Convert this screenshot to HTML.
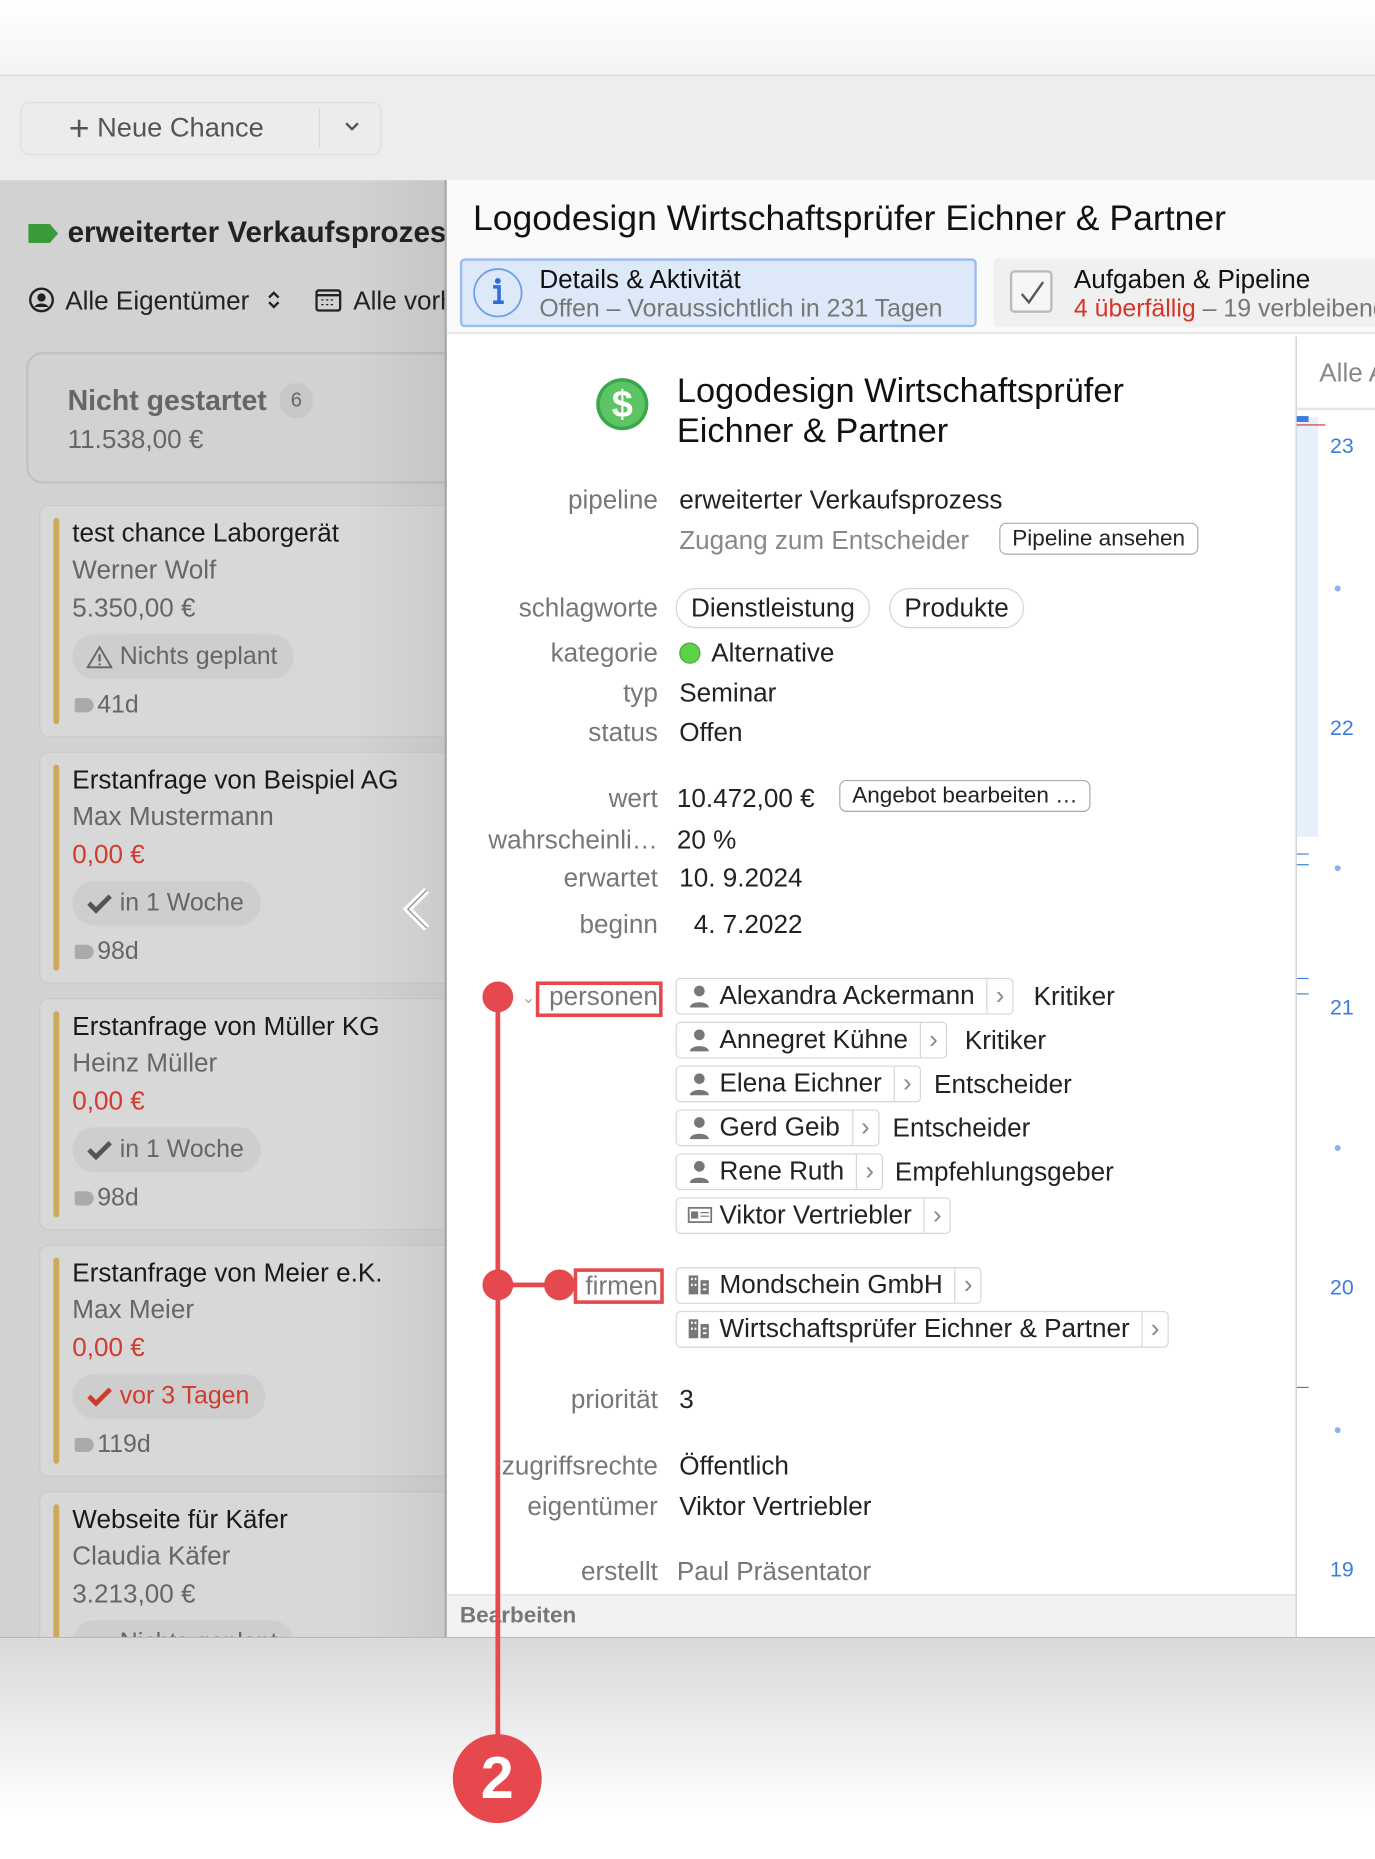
<!DOCTYPE html>
<html><head><meta charset="utf-8"><style>
*{margin:0;padding:0;box-sizing:border-box}
html,body{width:1375px;height:1859px;overflow:hidden;background:#fff}
#s{position:absolute;left:0;top:0;width:1160px;height:1568px;transform:scale(1.18534);transform-origin:0 0;font-family:"Liberation Sans",sans-serif;color:#222;overflow:hidden}
.a{position:absolute;white-space:nowrap;line-height:30px}
.lab{color:#777;font-size:22px;text-align:right;width:200px;left:355px}
.val{font-size:22px;left:573px;color:#222}
.btn{position:absolute;border:1.5px solid #aaa;border-radius:6px;background:#fff;font-size:19px;line-height:25px;padding:0 10px;white-space:nowrap}
.chip{position:absolute;border:1.5px solid #d6d6d6;border-radius:4px;background:#fff;height:31px;font-size:22px;line-height:28px;padding-left:36px;white-space:nowrap}
.chip .ar{position:absolute;right:0;top:0;width:22px;height:100%;border-left:1.5px solid #d6d6d6;color:#888;font-size:22px;text-align:center}
.card{position:absolute;left:33px;width:360px;background:#d8d8d8;border:1px solid #cacaca;border-radius:8px}
.card .bar{position:absolute;left:11px;top:10px;bottom:10px;width:5px;border-radius:3px;background:#cfa95a}
.card .t{position:absolute;left:27px;font-size:22px;white-space:nowrap;line-height:28px}
.pill{position:absolute;left:27px;height:38px;border-radius:19px;background:#cecece;font-size:21px;line-height:38px;padding:0 14px 0 40px;color:#666;white-space:nowrap}
.tag{position:absolute;left:29px;font-size:21px;color:#666;line-height:26px}
.tag:before{content:"";display:inline-block;width:16px;height:12px;background:#aaa;border-radius:2px 6px 6px 2px;margin-right:3px;vertical-align:0}
.num{position:absolute;left:1122px;color:#3a7fe0;font-size:18px}
.dot{position:absolute;left:1126px;width:5px;height:5px;border-radius:50%;background:#8ab4f0}
</style></head><body><div id="s">
<div style="position:absolute;left:0;top:0;width:1160px;height:63px;background:linear-gradient(#fff,#f4f4f4)"></div>
<div style="position:absolute;left:0;top:63px;width:1160px;height:1px;background:#cfcfcf"></div>
<div style="position:absolute;left:0;top:64px;width:1160px;height:88px;background:#ededed"></div>
<div style="position:absolute;left:17px;top:86px;width:305px;height:45px;border:1.5px solid #dedede;border-radius:8px;background:#ececec"></div>
<div class="a" style="left:58px;top:92px;font-size:23px;color:#555"><span style="font-size:30px;vertical-align:-3px">+</span> Neue Chance</div>
<div style="position:absolute;left:269px;top:92px;width:1px;height:33px;background:#d8d8d8"></div>
<svg style="position:absolute;left:290px;top:102px" width="14" height="10"><path d="M2 2l5 5 5-5" stroke="#555" stroke-width="2" fill="none"/></svg>

<div style="position:absolute;left:0;top:152px;width:376px;height:1229px;background:#d2d2d2;overflow:hidden">
<div style="position:absolute;left:0;top:-152px;width:376px;height:1381px">
<svg style="position:absolute;left:23px;top:187px" width="28" height="20"><path d="M1 2h18l7 8-7 8H1z" fill="#3a9a3a"/></svg>
<div class="a" style="left:57px;top:181px;font-size:25px;font-weight:bold;color:#222">erweiterter Verkaufsprozess</div>
<svg style="position:absolute;left:24px;top:242px" width="22" height="22"><circle cx="11" cy="11" r="9.5" stroke="#222" stroke-width="2" fill="none"/><circle cx="11" cy="9" r="3.5" fill="#222"/><path d="M5 17c2-4 10-4 12 0" fill="#222"/></svg>
<div class="a" style="left:55px;top:239px;font-size:22px;color:#222">Alle Eigentümer</div>
<svg style="position:absolute;left:225px;top:244px" width="12" height="18"><path d="M2 7l4-4 4 4M2 11l4 4 4-4" stroke="#222" stroke-width="2" fill="none"/></svg>
<svg style="position:absolute;left:266px;top:243px" width="22" height="20"><rect x="1" y="2" width="20" height="17" rx="2" stroke="#222" stroke-width="2" fill="none"/><path d="M1 6h20" stroke="#222" stroke-width="2"/><path d="M5 10h2M9 10h2M13 10h2M5 14h2M9 14h2M13 14h2" stroke="#222"/></svg>
<div class="a" style="left:298px;top:239px;font-size:22px;color:#222">Alle vorh</div>
<div style="position:absolute;left:22px;top:297px;width:370px;height:111px;border:2px solid #c2c2c2;border-radius:14px;background:#d2d2d2"></div>
<div class="a" style="left:57px;top:324px;font-size:24px;font-weight:bold;color:#666">Nicht gestartet</div>
<div style="position:absolute;left:236px;top:323px;width:28px;height:30px;border-radius:14px;background:#c8c8c8;font-size:17px;color:#666;text-align:center;line-height:30px">6</div>
<div class="a" style="left:57px;top:356px;font-size:22px;color:#666">11.538,00 €</div>

<div class="card" style="top:426px;height:196px"><div class="bar"></div>
<div class="t" style="top:9px;color:#1a1a1a">test chance Laborgerät</div>
<div class="t" style="top:40px;color:#666">Werner Wolf</div>
<div class="t" style="top:72px;color:#666">5.350,00 €</div>
<div class="pill" style="top:108px">Nichts geplant<svg style="position:absolute;left:12px;top:9px" width="22" height="20"><path d="M11 2L1 19h20z" stroke="#666" stroke-width="1.6" fill="none"/><path d="M11 8v6" stroke="#666" stroke-width="2"/><circle cx="11" cy="16.5" r="1" fill="#666"/></svg></div>
<div class="tag" style="top:155px">41d</div></div>

<div class="card" style="top:634px;height:196px"><div class="bar"></div>
<div class="t" style="top:9px;color:#1a1a1a">Erstanfrage von Beispiel AG</div>
<div class="t" style="top:40px;color:#666">Max Mustermann</div>
<div class="t" style="top:72px;color:#d03b2f">0,00 €</div>
<div class="pill" style="top:108px">in 1 Woche<svg style="position:absolute;left:12px;top:10px" width="22" height="18"><path d="M2 9l6 6L20 3" stroke="#555" stroke-width="4" fill="none"/></svg></div>
<div class="tag" style="top:155px">98d</div></div>

<div class="card" style="top:842px;height:196px"><div class="bar"></div>
<div class="t" style="top:9px;color:#1a1a1a">Erstanfrage von Müller KG</div>
<div class="t" style="top:40px;color:#666">Heinz Müller</div>
<div class="t" style="top:72px;color:#d03b2f">0,00 €</div>
<div class="pill" style="top:108px">in 1 Woche<svg style="position:absolute;left:12px;top:10px" width="22" height="18"><path d="M2 9l6 6L20 3" stroke="#555" stroke-width="4" fill="none"/></svg></div>
<div class="tag" style="top:155px">98d</div></div>

<div class="card" style="top:1050px;height:196px"><div class="bar"></div>
<div class="t" style="top:9px;color:#1a1a1a">Erstanfrage von Meier e.K.</div>
<div class="t" style="top:40px;color:#666">Max Meier</div>
<div class="t" style="top:72px;color:#d03b2f">0,00 €</div>
<div class="pill" style="top:108px;color:#d03b2f">vor 3 Tagen<svg style="position:absolute;left:12px;top:10px" width="22" height="18"><path d="M2 9l6 6L20 3" stroke="#d03b2f" stroke-width="4" fill="none"/></svg></div>
<div class="tag" style="top:155px">119d</div></div>

<div class="card" style="top:1258px;height:196px"><div class="bar"></div>
<div class="t" style="top:9px;color:#1a1a1a">Webseite für Käfer</div>
<div class="t" style="top:40px;color:#666">Claudia Käfer</div>
<div class="t" style="top:72px;color:#666">3.213,00 €</div>
<div class="pill" style="top:108px">Nichts geplant</div></div>
<div style="position:absolute;left:300px;top:152px;width:76px;height:1229px;background:linear-gradient(90deg,rgba(0,0,0,0),rgba(0,0,0,0.06))"></div>
<svg style="position:absolute;left:338px;top:748px" width="26" height="38"><path d="M22 3L6 19l16 16" stroke="#fff" stroke-width="6" fill="none"/><path d="M22 3L6 19l16 16" stroke="#888" stroke-width="1" fill="none"/></svg>
</div></div>

<div style="position:absolute;left:377px;top:282px;width:783px;height:1100px;background:#fff"></div>
<div style="position:absolute;left:375px;top:152px;width:2px;height:1229px;background:#a8a8a8"></div>
<div style="position:absolute;left:377px;top:152px;width:783px;height:130px;background:#fafafa;border-bottom:2px solid #e6e6e6"></div>
<div class="a" style="left:399px;top:167px;font-size:30px;color:#111;line-height:36px">Logodesign Wirtschaftsprüfer Eichner &amp; Partner</div>
<div style="position:absolute;left:388px;top:218px;width:436px;height:58px;background:#dde8f8;border:2px solid #9bbcf0;border-radius:4px"></div>
<svg style="position:absolute;left:397px;top:224px" width="46" height="46"><circle cx="23" cy="23" r="20" stroke="#6f9ee8" stroke-width="1.5" fill="none"/><circle cx="23" cy="13" r="2.5" fill="#2d6fd6"/><path d="M19 18h5v13h4M19 31h9" stroke="#2d6fd6" stroke-width="3" fill="none"/></svg>
<div class="a" style="left:455px;top:221px;font-size:22px;color:#111">Details &amp; Aktivität</div>
<div class="a" style="left:455px;top:246px;font-size:21px;color:#777">Offen – Voraussichtlich in 231 Tagen</div>
<div style="position:absolute;left:838px;top:218px;width:330px;height:58px;background:#f0f0f0;border-radius:4px"></div>
<div style="position:absolute;left:852px;top:228px;width:36px;height:36px;border:2px solid #bbb;border-radius:4px;background:#f6f6f6"></div>
<svg style="position:absolute;left:856px;top:232px" width="30" height="30"><path d="M6 16l6 7L24 6" stroke="#555" stroke-width="2" fill="none"/></svg>
<div class="a" style="left:906px;top:221px;font-size:22px;color:#111">Aufgaben &amp; Pipeline</div>
<div class="a" style="left:906px;top:246px;font-size:21px;color:#777"><span style="color:#d8352a">4 überfällig</span> – 19 verbleibend</div>

<div style="position:absolute;left:1093px;top:284px;width:1px;height:1097px;background:#c8c8c8"></div>
<div class="a" style="left:1113px;top:300px;font-size:22px;color:#888">Alle A</div>
<div style="position:absolute;left:1094px;top:344px;width:66px;height:2px;background:#e4e4e4"></div>
<div style="position:absolute;left:1094px;top:352px;width:18px;height:354px;background:#e6effc"></div>
<div style="position:absolute;left:1094px;top:351px;width:10px;height:5px;background:#3a7fe0"></div>
<div style="position:absolute;left:1094px;top:358px;width:24px;height:1px;background:#d03b2f"></div>
<div class="num" style="top:366px">23</div><div class="dot" style="top:494px"></div>
<div class="num" style="top:604px">22</div><div class="dot" style="top:730px"></div>
<div class="num" style="top:840px">21</div><div class="dot" style="top:966px"></div>
<div class="num" style="top:1076px">20</div><div class="dot" style="top:1204px"></div>
<div class="num" style="top:1314px">19</div>
<div style="position:absolute;left:1094px;top:720px;width:10px;height:10px;border-top:1px solid #3a7fe0;border-bottom:1px solid #3a7fe0"></div>
<div style="position:absolute;left:1094px;top:825px;width:10px;height:14px;border-top:1px solid #3a7fe0;border-bottom:1px solid #3a7fe0"></div>
<div style="position:absolute;left:1094px;top:1170px;width:10px;height:1px;background:#3a7fe0"></div>

<svg style="position:absolute;left:501px;top:317px" width="48" height="48"><circle cx="24" cy="24" r="22" fill="#3aa74a"/><circle cx="24" cy="24" r="19" fill="#5cc462"/><text x="24" y="35" text-anchor="middle" font-family="Liberation Sans" font-weight="bold" font-size="32" fill="#fff">$</text></svg>
<div class="a" style="left:571px;top:313px;font-size:29px;color:#111;line-height:34px">Logodesign Wirtschaftsprüfer<br>Eichner &amp; Partner</div>

<div class="a lab" style="top:407px">pipeline</div><div class="a val" style="top:407px">erweiterter Verkaufsprozess</div>
<div class="a val" style="top:441px;color:#888">Zugang zum Entscheider</div>
<div class="btn" style="left:843px;top:441px">Pipeline ansehen</div>
<div class="a lab" style="top:498px">schlagworte</div>
<div class="btn" style="left:570px;top:496px;height:34px;line-height:31px;border-radius:17px;border-color:#d6d6d6;font-size:22px;padding:0 12px">Dienstleistung</div>
<div class="btn" style="left:750px;top:496px;height:34px;line-height:31px;border-radius:17px;border-color:#d6d6d6;font-size:22px;padding:0 12px">Produkte</div>
<div class="a lab" style="top:536px">kategorie</div>
<div style="position:absolute;left:573px;top:542px;width:18px;height:18px;border-radius:50%;background:#5ed14a;border:1px solid #46a83a"></div>
<div class="a val" style="top:536px;left:600px">Alternative</div>
<div class="a lab" style="top:570px">typ</div><div class="a val" style="top:570px">Seminar</div>
<div class="a lab" style="top:603px">status</div><div class="a val" style="top:603px">Offen</div>
<div class="a lab" style="top:659px">wert</div><div class="a val" style="top:659px;left:571px">10.472,00 €</div>
<div class="btn" style="left:708px;top:658px">Angebot bearbeiten …</div>
<div class="a lab" style="top:694px">wahrscheinli…</div><div class="a val" style="top:694px;left:571px">20 %</div>
<div class="a lab" style="top:726px">erwartet</div><div class="a val" style="top:726px">10.  9.2024</div>
<div class="a lab" style="top:765px">beginn</div><div class="a val" style="top:765px">&nbsp;&nbsp;4.  7.2022</div>

<div class="a" style="left:440px;top:826px;font-size:14px;color:#aaa">⌄</div>
<div class="a lab" style="top:826px">personen</div>
<div class="chip" style="left:570px;top:825px;padding-right:32px">Alexandra Ackermann<span class="ar">›</span></div><div class="a val" style="left:872px;top:826px">Kritiker</div>
<div class="chip" style="left:570px;top:862px;padding-right:32px">Annegret Kühne<span class="ar">›</span></div><div class="a val" style="left:814px;top:863px">Kritiker</div>
<div class="chip" style="left:570px;top:899px;padding-right:32px">Elena Eichner<span class="ar">›</span></div><div class="a val" style="left:788px;top:900px">Entscheider</div>
<div class="chip" style="left:570px;top:936px;padding-right:32px">Gerd Geib<span class="ar">›</span></div><div class="a val" style="left:753px;top:937px">Entscheider</div>
<div class="chip" style="left:570px;top:973px;padding-right:32px">Rene Ruth<span class="ar">›</span></div><div class="a val" style="left:755px;top:974px">Empfehlungsgeber</div>
<div class="chip" style="left:570px;top:1010px;padding-right:32px">Viktor Vertriebler<span class="ar">›</span></div>
<div class="a lab" style="top:1070px">firmen</div>
<div class="chip" style="left:570px;top:1069px;padding-right:32px">Mondschein GmbH<span class="ar">›</span></div>
<div class="chip" style="left:570px;top:1106px;padding-right:32px">Wirtschaftsprüfer Eichner &amp; Partner<span class="ar">›</span></div>
<svg style="position:absolute;left:580px;top:830px" width="20" height="180"><g fill="#777"><circle cx="10" cy="6" r="4.5"/><path d="M2 20c0-6 16-6 16 0z"/><circle cx="10" cy="43" r="4.5"/><path d="M2 57c0-6 16-6 16 0z"/><circle cx="10" cy="80" r="4.5"/><path d="M2 94c0-6 16-6 16 0z"/><circle cx="10" cy="117" r="4.5"/><path d="M2 131c0-6 16-6 16 0z"/><circle cx="10" cy="154" r="4.5"/><path d="M2 168c0-6 16-6 16 0z"/></g></svg>
<svg style="position:absolute;left:580px;top:1018px" width="22" height="14"><rect x="1" y="1" width="19" height="12" stroke="#777" stroke-width="1.5" fill="none"/><rect x="3" y="4" width="6" height="6" fill="#777"/><path d="M11 5h7M11 8h7" stroke="#777"/></svg>
<svg style="position:absolute;left:580px;top:1075px" width="20" height="18"><g fill="#777"><rect x="1" y="1" width="8" height="16"/><rect x="11" y="5" width="7" height="12"/></g><g fill="#fff"><rect x="3" y="3" width="1.5" height="2"/><rect x="6" y="3" width="1.5" height="2"/><rect x="3" y="8" width="1.5" height="2"/><rect x="6" y="8" width="1.5" height="2"/><rect x="13" y="8" width="3" height="1.5"/><rect x="13" y="12" width="3" height="1.5"/></g></svg>
<svg style="position:absolute;left:580px;top:1112px" width="20" height="18"><g fill="#777"><rect x="1" y="1" width="8" height="16"/><rect x="11" y="5" width="7" height="12"/></g><g fill="#fff"><rect x="3" y="3" width="1.5" height="2"/><rect x="6" y="3" width="1.5" height="2"/><rect x="3" y="8" width="1.5" height="2"/><rect x="6" y="8" width="1.5" height="2"/><rect x="13" y="8" width="3" height="1.5"/><rect x="13" y="12" width="3" height="1.5"/></g></svg>

<div class="a lab" style="top:1166px">priorität</div><div class="a val" style="top:1166px">3</div>
<div class="a lab" style="top:1222px">zugriffsrechte</div><div class="a val" style="top:1222px">Öffentlich</div>
<div class="a lab" style="top:1256px">eigentümer</div><div class="a val" style="top:1256px">Viktor Vertriebler</div>
<div class="a lab" style="top:1311px">erstellt</div><div class="a val" style="top:1311px;left:571px;color:#777">Paul Präsentator</div>

<div style="position:absolute;left:377px;top:1345px;width:716px;height:36px;background:#f2f2f2;border-top:1px solid #ddd"></div>
<div class="a" style="left:388px;top:1349px;font-size:19px;font-weight:bold;color:#777">Bearbeiten</div>
<div style="position:absolute;left:0;top:1381px;width:1160px;height:1px;background:#b8b8b8"></div>
<div style="position:absolute;left:0;top:1382px;width:1160px;height:186px;background:linear-gradient(#d9d9d9,#fff 80%)"></div>

<div style="position:absolute;left:452px;top:828px;width:107px;height:30px;border:3px solid #e5484d"></div>
<div style="position:absolute;left:484px;top:1070px;width:76px;height:30px;border:3px solid #e5484d"></div>
<div style="position:absolute;left:418px;top:841px;width:4px;height:630px;background:#e5484d"></div>
<div style="position:absolute;left:407px;top:828px;width:26px;height:26px;border-radius:50%;background:#e5484d"></div>
<div style="position:absolute;left:407px;top:1071px;width:26px;height:26px;border-radius:50%;background:#e5484d"></div>
<div style="position:absolute;left:420px;top:1082px;width:52px;height:4px;background:#e5484d"></div>
<div style="position:absolute;left:459px;top:1071px;width:26px;height:26px;border-radius:50%;background:#e5484d"></div>
<div style="position:absolute;left:382px;top:1463px;width:75px;height:75px;border-radius:50%;background:#e5484d;color:#fff;font-weight:bold;font-size:50px;text-align:center;line-height:75px">2</div>
</div></body></html>
